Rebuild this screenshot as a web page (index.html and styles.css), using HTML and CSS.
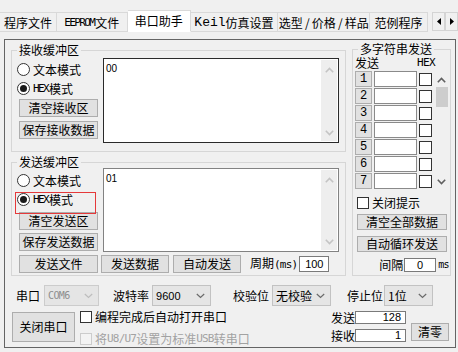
FILE: index.html
```html
<!DOCTYPE html>
<html lang="zh-CN">
<head>
<meta charset="utf-8">
<title>串口助手</title>
<link rel="stylesheet" href="styles.css">
</head>
<body>
<div class="tabbar">
  <div class="tab t1">程序文件</div>
  <div class="tab t2"><span class="latb">EEPROM</span>文件</div>
  <div class="tab t3 active">串口助手</div>
  <div class="tab t4"><span class="latk">Keil</span>仿真设置</div>
  <div class="tab t5">选型<span class="sl">/</span>价格<span class="sl">/</span>样品</div>
  <div class="tab t6">范例程序</div>
  <div class="tabnav">
    <span class="navbtn"><svg width="4" height="7" viewBox="0 0 4 7"><path d="M4 0V7L0 3.5Z" fill="#000"/></svg></span>
    <span class="navbtn"><svg width="4" height="7" viewBox="0 0 4 7"><path d="M0 0V7L4 3.5Z" fill="#000"/></svg></span>
  </div>
</div>

<div class="page">
  <div class="groups">
    <div class="leftcol">
      <fieldset class="grp recv">
        <legend>接收缓冲区</legend>
        <div class="buf">
          <div class="ctrls">
            <div class="radio"><span class="rdo"></span>文本模式</div>
            <div class="radio"><span class="rdo on"></span><span class="latb">HEX</span>模式</div>
            <button class="btn sbtn r1">清空接收区</button>
            <button class="btn sbtn r2">保存接收数据</button>
          </div>
          <div class="tbox dark">
            <div class="tval">00</div>
            <div class="vs">
              <svg class="chev" width="9" height="6" viewBox="0 0 9 6"><polyline points="0.8,5.2 4.5,1.5 8.2,5.2"/></svg>
              <svg class="chev" width="9" height="6" viewBox="0 0 9 6"><polyline points="0.8,0.8 4.5,4.5 8.2,0.8"/></svg>
            </div>
          </div>
        </div>
      </fieldset>

      <fieldset class="grp send">
        <legend>发送缓冲区</legend>
        <div class="buf">
          <div class="ctrls top3">
            <div class="radio"><span class="rdo"></span>文本模式</div>
            <div class="radio marked"><span class="rdo on"></span><span class="latb">HEX</span>模式</div>
            <button class="btn sbtn s1">清空发送区</button>
            <button class="btn sbtn s2">保存发送数据</button>
          </div>
          <div class="tbox short">
            <div class="tval">01</div>
            <div class="vs">
              <svg class="chev" width="9" height="6" viewBox="0 0 9 6"><polyline points="0.8,5.2 4.5,1.5 8.2,5.2"/></svg>
              <svg class="chev" width="9" height="6" viewBox="0 0 9 6"><polyline points="0.8,0.8 4.5,4.5 8.2,0.8"/></svg>
            </div>
          </div>
        </div>
        <div class="sendrow">
          <button class="btn w79">发送文件</button>
          <button class="btn w68 ml3">发送数据</button>
          <button class="btn w68 ml4">自动发送</button>
          <span class="period">周期<span class="mono">(ms)</span></span>
          <span class="ibox per">100</span>
        </div>
      </fieldset>
    </div>

    <fieldset class="grp multi">
      <legend>多字符串发送</legend>
      <div class="mhead"><span>发送</span><span class="hx">HEX</span></div>
      <div class="mlist">
        <div class="mrows">
          <div class="mrow"><button class="btn nbtn">1</button><span class="minput"></span><span class="chk"></span></div>
          <div class="mrow"><button class="btn nbtn">2</button><span class="minput"></span><span class="chk"></span></div>
          <div class="mrow"><button class="btn nbtn">3</button><span class="minput"></span><span class="chk"></span></div>
          <div class="mrow"><button class="btn nbtn">4</button><span class="minput"></span><span class="chk"></span></div>
          <div class="mrow"><button class="btn nbtn">5</button><span class="minput"></span><span class="chk"></span></div>
          <div class="mrow"><button class="btn nbtn">6</button><span class="minput"></span><span class="chk"></span></div>
          <div class="mrow"><button class="btn nbtn">7</button><span class="minput"></span><span class="chk"></span></div>
        </div>
        <div class="mscroll">
          <svg class="chev up" width="9" height="6" viewBox="0 0 9 6"><polyline points="0.8,5.2 4.5,1.5 8.2,5.2"/></svg>
          <span class="thumb"></span>
          <svg class="chev dn" width="9" height="6" viewBox="0 0 9 6"><polyline points="0.8,0.8 4.5,4.5 8.2,0.8"/></svg>
        </div>
      </div>
      <div class="ckrow"><span class="chk sm"></span>关闭提示</div>
      <button class="btn wide b1">清空全部数据</button>
      <button class="btn wide b2">自动循环发送</button>
      <div class="gaprow"><span>间隔</span><span class="ibox gapin">0</span><span class="mono ms">ms</span></div>
    </fieldset>
  </div>

  <div class="bottom">
    <div class="brow1">
      <span class="blbl l1">串口</span>
      <span class="combo dis c55"><span class="ctext com">COM6</span><svg class="chev cv" width="9" height="6" viewBox="0 0 9 6"><polyline points="0.8,1 4.5,4.5 8.2,1"/></svg></span>
      <span class="blbl l2">波特率</span>
      <span class="combo c59"><span class="ctext num">9600</span><svg class="chev cv" width="9" height="6" viewBox="0 0 9 6"><polyline points="0.8,1 4.5,4.5 8.2,1"/></svg></span>
      <span class="blbl l3">校验位</span>
      <span class="combo c59"><span class="ctext">无校验</span><svg class="chev cv" width="9" height="6" viewBox="0 0 9 6"><polyline points="0.8,1 4.5,4.5 8.2,1"/></svg></span>
      <span class="blbl l4">停止位</span>
      <span class="combo c49"><span class="ctext">1位</span><svg class="chev cv" width="9" height="6" viewBox="0 0 9 6"><polyline points="0.8,1 4.5,4.5 8.2,1"/></svg></span>
    </div>
    <div class="brow2">
      <button class="btn closebtn">关闭串口</button>
      <div class="chkcol">
        <div class="bck"><span class="chk sm"></span>编程完成后自动打开串口</div>
        <div class="bck disabled"><span class="chk sm"></span>将<span class="mono">U8/U7</span>设置为标准<span class="mono">USB</span>转串口</div>
      </div>
      <div class="stats">
        <div class="scol">
          <div class="srow"><span class="slbl">发送</span><span class="sbox">128</span></div>
          <div class="srow"><span class="slbl">接收</span><span class="sbox">1</span></div>
        </div>
        <button class="btn clr">清零</button>
      </div>
    </div>
  </div>
</div>
</body>
</html>
```

FILE: styles.css
```css
* { box-sizing: border-box; }
html, body { margin: 0; padding: 0; background: #f0f0f0; }
body {
  width: 458px; height: 352px; overflow: hidden;
  font-family: "Noto Sans CJK SC", "Noto Sans", sans-serif;
  font-size: 12px; line-height: 14px; color: #000;
}
button { font: inherit; color: inherit; margin: 0; }

.latb { font: 11px/14px "DejaVu Sans Mono", monospace; letter-spacing: -1.6px; margin-right: 1px; }
.latk { font: 13px/14px "Liberation Mono", monospace; }
.mono { font: 11px/14px "DejaVu Sans Mono", monospace; letter-spacing: -0.8px; }
.sl { display: inline-block; width: 9px; text-align: center; }

/* tabs */
.tabbar { display: flex; align-items: flex-end; height: 32px; }
.tab {
  display: flex; align-items: center; justify-content: center;
  height: 20px; padding-top: 1px;
  border: 1px solid #d9d9d9; border-left: 0;
  background: #f0f0f0; white-space: nowrap;
}
.t1 { width: 58px; margin-left: -1px; border-left: 1px solid #d9d9d9; }
.t2 { width: 71px; }
.t3 { width: 63px; }
.t4 { width: 88px; }
.t5 { width: 92px; }
.t6 { width: 58px; }
.tab.active { height: 22px; padding-top: 0; background: #fff; border-bottom-color: #fff; }
.tabnav { display: flex; margin: 0 0 1px 4px; }
.navbtn {
  width: 13px; height: 19px; border: 1px solid #d4d4d4; background: #f0f0f0;
  display: flex; align-items: center; justify-content: center;
}

/* page */
.page {
  width: 452px; height: 309px; margin: 7px 0 0 4px;
  border: 1px solid #646464;
  display: flex; flex-direction: column;
}
.groups { display: flex; align-items: flex-start; gap: 6px; height: 236px; padding: 3px 0 0 6px; flex: none; }
.leftcol { display: flex; flex-direction: column; gap: 4px; margin-top: 1px; width: 335px; }

.grp { margin: 0; border: 1px solid #d6d6d6; min-width: 0; }
.grp legend { padding: 0 2px; font-size: 12px; line-height: 12px; }
.recv { width: 335px; padding: 0 6px 8px 5px; }
.send { width: 335px; padding: 0 6px 2px 5px; }

.buf { display: flex; gap: 5px; align-items: flex-start; }
.ctrls { width: 81px; padding-top: 4px; display: flex; flex-direction: column; }
.ctrls.top3 { padding-top: 3px; }
.radio { display: flex; align-items: center; height: 19px; white-space: nowrap; }
.rdo {
  width: 13px; height: 13px; border: 1px solid #333; border-radius: 50%;
  background: #fff; margin-right: 3px; flex: none;
  display: flex; align-items: center; justify-content: center;
}
.rdo.on::before { content: ""; width: 7px; height: 7px; border-radius: 50%; background: #1a1a1a; }
.marked { position: relative; }
.marked::after {
  content: ""; position: absolute; left: -2px; top: 2px;
  width: 79px; height: 20px; border: 1px solid #e5393a;
}

.btn {
  display: flex; align-items: center; justify-content: center;
  height: 18px; padding: 0; border: 1px solid #adadad; background: #e1e1e1;
  white-space: nowrap; line-height: 14px;
}
.sbtn { width: 79px; margin-left: 2px; }
.r1 { margin-top: 1px; }
.r2 { margin-top: 4px; }
.s1 { margin-top: 3px; }
.s2 { margin-top: 3px; }

.tbox { width: 236px; height: 85px; margin-top: 2px; border: 1px solid #828282; background: #fff; display: flex; }
.tbox.dark { border-color: #2a2a2a; }
.tbox.short { height: 84px; margin-top: 0; }
.tval { flex: 1; padding: 4px 0 0 2px; font: 10px/12px "Liberation Sans", Arial, sans-serif; }
.vs {
  width: 16px; margin: 1px; background: #eeeeee;
  display: flex; flex-direction: column; justify-content: space-between; align-items: center;
  padding: 7px 0 5px;
}
.chev { display: block; fill: none; stroke: #c4c4c4; stroke-width: 1.6; }

.sendrow { display: flex; align-items: center; height: 18px; margin-top: 3px; padding-left: 2px; }
.w79 { width: 79px; }
.w68 { width: 68px; }
.ml3 { margin-left: 3px; }
.ml4 { margin-left: 4px; }
.period { margin-left: 9px; white-space: nowrap; }
.ibox {
  display: flex; align-items: center; justify-content: center;
  border: 1px solid #7a7a7a; background: #fff;
  font: 11px/12px "Liberation Sans", Arial, sans-serif;
}
.per { width: 30px; height: 16px; margin-left: 2px; }

/* multi string */
.multi { width: 99px; padding: 0 1px 3px 2px; }
.multi legend { margin-left: 3px; }
.mhead { display: flex; align-items: flex-end; height: 14px; line-height: 12px; }
.mhead .hx { margin-left: 38px; font: 11px/12px "DejaVu Sans Mono", monospace; letter-spacing: -0.6px; }
.mlist { display: flex; margin-top: 2px; height: 118px; }
.mrows { display: flex; flex-direction: column; gap: 1px; width: 77px; }
.mrow { display: flex; align-items: center; height: 16px; }
.nbtn { width: 17px; height: 16px; font: 12px/14px "Liberation Mono", monospace; }
.minput { width: 43px; height: 16px; margin-left: 2px; border: 1px solid #8a8a8a; background: #fff; }
.chk { display: block; flex: none; width: 13px; height: 13px; border: 1px solid #333; background: #fff; margin-left: 2px; }
.chk.sm { width: 12px; height: 12px; margin-left: 0; margin-right: 3px; }
.mscroll { width: 13px; margin-left: 3px; background: #f0f0f0; display: flex; flex-direction: column; align-items: center; }
.mscroll .chev { stroke: #606060; }
.mscroll .up { margin-top: 6px; }
.thumb { display: block; width: 12px; height: 20px; margin-top: 4px; background: #cdcdcd; }
.mscroll .dn { margin-top: auto; margin-bottom: 4px; }

.ckrow { display: flex; align-items: center; height: 16px; margin: 6px 0 0 2px; white-space: nowrap; }
.wide { width: 90px; height: 16px; margin-left: 2px; }
.b1 { margin-top: 3px; }
.b2 { margin-top: 6px; }
.gaprow { display: flex; align-items: center; justify-content: flex-end; height: 14px; margin-top: 6px; }
.gapin { width: 32px; height: 14px; margin-left: 1px; }
.ms { font-size: 10px; margin-left: 2px; letter-spacing: -0.6px; }

/* bottom */
.bottom { flex: 1; padding: 9px 6px 0 7px; }
.brow1 { display: flex; align-items: center; height: 21px; }
.blbl { white-space: nowrap; }
.l1 { margin: 0 4px 0 4px; }
.l2 { margin: 0 3px 0 14px; }
.l3 { margin: 0 3px 0 22px; }
.l4 { margin: 0 1px 0 16px; }
.combo {
  display: flex; align-items: center; justify-content: space-between;
  height: 21px; padding: 0 5px 0 3px;
  border: 1px solid #c2c2c2; background: #e5e5e5; white-space: nowrap;
}
.combo .cv { stroke: #6a6a6a; stroke-width: 1.2; }
.combo.dis { border-color: #cccccc; }
.combo.dis .cv { stroke: #bdbdbd; }
.c55 { width: 55px; }
.c59 { width: 59px; }
.c49 { width: 49px; }
.ctext.com { font: 10px/12px "DejaVu Sans Mono", monospace; color: #8e8e8e; letter-spacing: -0.6px; }
.ctext.num { font: 11px/12px "Liberation Sans", Arial, sans-serif; }

.brow2 { display: flex; align-items: flex-start; }
.closebtn { width: 63px; height: 30px; margin-top: 6px; }
.chkcol { display: flex; flex-direction: column; gap: 6px; margin: 3px 0 0 5px; }
.bck { display: flex; align-items: center; height: 16px; white-space: nowrap; }
.bck.disabled { color: #a2a2a2; }
.bck.disabled .chk { border-color: #cccccc; background: #f3f3f3; }

.stats { display: flex; align-items: flex-end; margin: 5px 0 0 auto; }
.scol { display: flex; flex-direction: column; gap: 5px; }
.srow { display: flex; align-items: center; height: 13px; }
.slbl { width: 24px; line-height: 13px; }
.sbox {
  width: 51px; height: 13px; border: 1px solid #7a7a7a; background: #fff;
  text-align: right; padding-right: 4px;
  font: 11px/11px "Liberation Sans", Arial, sans-serif;
}
.clr { width: 38px; height: 18px; margin: 0 0 1px 5px; }
```
